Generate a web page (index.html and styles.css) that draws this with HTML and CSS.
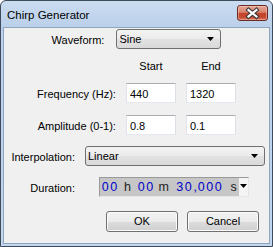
FILE: index.html
```html
<!DOCTYPE html>
<html>
<head>
<meta charset="utf-8">
<link rel="stylesheet" href="styles.css">
</head>
<body>
<div class="window">
  <div class="titlebar">
    <span class="title">Chirp Generator</span>
    <div class="close">
      <svg width="31" height="16" viewBox="0 0 31 16">
        <path d="M11.5 5 L19.5 11.5 M19.5 5 L11.5 11.5" stroke="#3a3a3a" stroke-width="4.2" stroke-linecap="square" fill="none"/>
        <path d="M11.5 5 L19.5 11.5 M19.5 5 L11.5 11.5" stroke="#ffffff" stroke-width="2.2" stroke-linecap="square" fill="none"/>
      </svg>
    </div>
  </div>
  <div class="client">
    <div class="row-wave">
      <div class="lbl">Waveform:</div>
      <div class="combo wave-combo"><span class="combo-text">Sine</span><svg class="arrow" width="7" height="4" viewBox="0 0 7 4"><path d="M0 0H7L3.5 4Z" fill="#000"/></svg></div>
    </div>
    <div class="grid-mid">
      <div class="row">
        <div></div>
        <div class="hd">Start</div>
        <div class="hd">End</div>
      </div>
      <div class="row r-freq">
        <div class="lbl right">Frequency (Hz):</div>
        <div class="field">440</div>
        <div class="field">1320</div>
      </div>
      <div class="row r-amp">
        <div class="lbl right">Amplitude (0-1):</div>
        <div class="field">0.8</div>
        <div class="field">0.1</div>
      </div>
    </div>
    <div class="grid-low">
      <div class="lbl right">Interpolation:</div>
      <div class="combo interp-combo"><span class="combo-text">Linear</span><svg class="arrow" width="7" height="4" viewBox="0 0 7 4"><path d="M0 0H7L3.5 4Z" fill="#000"/></svg></div>
      <div class="lbl right">Duration:</div>
      <div class="dur">
        <div class="dur-text">
          <span class="d">0</span><span class="d">0</span><span class="u u-h">h</span><span class="d">0</span><span class="d">0</span><span class="u u-m">m</span><span class="d">3</span><span class="d">0</span><span class="u u-c">,</span><span class="d">0</span><span class="d">0</span><span class="d">0</span><span class="u u-s">s</span>
        </div>
        <div class="dur-btn"><svg width="7" height="4" viewBox="0 0 7 4"><path d="M0 0H7L3.5 4Z" fill="#000"/></svg></div>
      </div>
    </div>
    <div class="buttons">
      <div class="btn">OK</div>
      <div class="btn">Cancel</div>
    </div>
  </div>
</div>
</body>
</html>
```
FILE: styles.css
```css
* { box-sizing: border-box; }
html, body { margin: 0; padding: 0; }
body {
  width: 273px;
  height: 247px;
  overflow: hidden;
  background: #ffffff;
  font-family: "Liberation Sans", Arial, sans-serif;
  font-size: 11px;
  color: #000;
}
.window {
  width: 273px;
  height: 247px;
  border: 1px solid #3d4b5d;
  border-radius: 6px 6px 0 0;
  background: linear-gradient(#cadcf0, #bbd0ea 26px, #c2d6ed);
  padding: 0 2px 2px;
  display: flex;
  flex-direction: column;
}
.titlebar {
  height: 26px;
  display: flex;
  justify-content: space-between;
  align-items: flex-start;
  padding: 0 2px 0 4px;
}
.title {
  font-size: 11.5px;
  line-height: 26px;
  padding-top: 1px;
  color: #000;
}
.close {
  margin-top: 4px;
  width: 31px;
  height: 16px;
  border: 1px solid #6b2a22;
  border-radius: 3px;
  background: linear-gradient(#e6a796 0%, #d8826d 45%, #c4442b 52%, #c24630 75%, #d46d54 100%);
  box-shadow: inset 0 0 0 1px rgba(255, 215, 205, 0.45);
  display: flex;
  align-items: center;
  justify-content: center;
}
.close svg { display: block; margin: -1px; }
.client {
  flex: 1;
  background: #f0f0f0;
  border: 1px solid #8ea5c0;
  display: flex;
  flex-direction: column;
}
.lbl {
  height: 20px;
  line-height: 22px;
  white-space: nowrap;
}
.right { text-align: right; }
.row-wave {
  display: flex;
  justify-content: center;
  gap: 12px;
  margin-top: 1px;
}
.combo {
  height: 20px;
  border: 1px solid #707070;
  border-radius: 3px;
  background: linear-gradient(#f3f3f3 0%, #ebebeb 50%, #e2e2e2 51%, #d9d9d9 100%);
  display: flex;
  align-items: center;
  justify-content: space-between;
  padding: 0 6px 0 2px;
}
.combo-text { line-height: 18px; }
.arrow { display: block; }
.wave-combo { width: 105px; }
.grid-mid {
  display: grid;
  grid-template-columns: auto 50px 50px;
  column-gap: 10px;
  justify-content: center;
  margin-top: 11px;
}
.row { display: contents; }
.hd {
  text-align: center;
  line-height: 13px;
}
.r-freq > * { margin-top: 10px; }
.r-amp > * { margin-top: 12px; }
.field {
  height: 20px;
  background: #fff;
  border: 1px solid;
  border-color: #abadb3 #dbdfe6 #e3e9ef #e2e3ea;
  padding: 0 3px;
  line-height: 20px;
  white-space: nowrap;
}
.grid-low {
  display: grid;
  grid-template-columns: 67px 1fr;
  column-gap: 10px;
  row-gap: 11px;
  margin: 11px 3px 0 4px;
}
.interp-combo { width: 180px; }
.dur {
  margin-left: 14px;
  width: 150px;
  height: 20px;
  background: #c6c6c6;
  border: 1px solid;
  border-color: #9a9a9a #e6e6e6 #e6e6e6 #9a9a9a;
  display: flex;
  padding-left: 1px;
}
.dur-text {
  display: flex;
  font-size: 12.5px;
  line-height: 18px;
}
.d {
  width: 8.5px;
  text-align: center;
  color: #0000cc;
}
.u { color: #222; }
.u-h { width: 19px; padding-left: 6px; }
.u-m { width: 21.5px; padding-left: 4.5px; }
.u-c { width: 4.5px; padding-left: 1px; color: #0000cc; }
.u-s { width: 16px; padding-left: 8px; }
.dur-btn {
  margin-left: auto;
  width: 9px;
  background: #f4f4f4;
  display: flex;
  justify-content: center;
  padding-top: 6px;
}
.dur-btn svg { display: block; }
.buttons {
  display: flex;
  justify-content: flex-end;
  gap: 9px;
  margin: 14px 10px 0 0;
}
.btn {
  width: 72px;
  height: 21px;
  border: 1px solid #707070;
  border-radius: 3px;
  background: linear-gradient(#f2f2f2 0%, #ebebeb 50%, #dddddd 51%, #cfcfcf 100%);
  box-shadow: inset 0 0 0 1px #fbfbfb;
  text-align: center;
  line-height: 19px;
}
```
